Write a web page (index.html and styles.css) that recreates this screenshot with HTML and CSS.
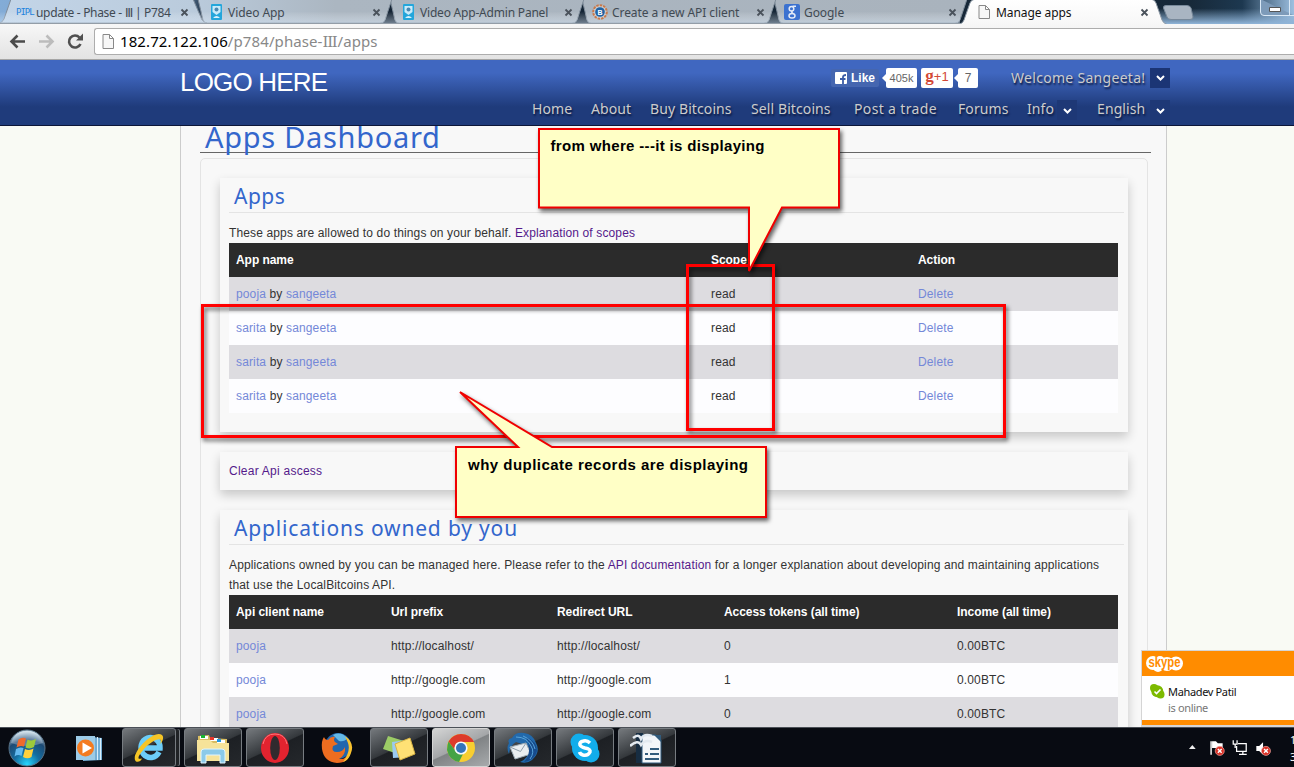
FILE: index.html
```html
<!DOCTYPE html>
<html lang="en">
<head>
<meta charset="utf-8">
<title>Manage apps</title>
<link rel="stylesheet" href="styles.css">
</head>
<body>
<header class="browser">
  <div class="tabstrip">
    <svg class="tab-shapes" width="1294" height="24" viewBox="0 0 1294 24">
      <defs>
        <linearGradient id="glass" x1="0" x2="1"><stop offset="0" stop-color="#83acd7"/><stop offset=".14" stop-color="#7397bd"/><stop offset=".16" stop-color="#142334"/><stop offset=".92" stop-color="#172939"/><stop offset=".96" stop-color="#1d3850"/><stop offset="1" stop-color="#9dc0e0"/></linearGradient>
        <linearGradient id="glow" x1="0" x2="0" y1="0" y2="1"><stop offset=".35" stop-color="#8fb2d3" stop-opacity="0"/><stop offset="1" stop-color="#8fb4d8"/></linearGradient>
        <linearGradient id="tabfill" gradientUnits="userSpaceOnUse" x1="0" x2="960" y1="0" y2="0"><stop offset="0" stop-color="#c3d5e8"/><stop offset=".2" stop-color="#bacbdc"/><stop offset=".35" stop-color="#abb6c1"/><stop offset="1" stop-color="#a9b3bd"/></linearGradient>
        <linearGradient id="sheen" x1="0" x2="0" y1="0" y2="1"><stop offset=".5" stop-color="#fff" stop-opacity="0"/><stop offset="1" stop-color="#d8e8f8" stop-opacity=".45"/></linearGradient>
        <linearGradient id="live" x1="0" x2="0" y1="0" y2="1"><stop offset="0" stop-color="#fff"/><stop offset="1" stop-color="#f7f7f7"/></linearGradient>
      </defs>
      <path fill="url(#glass)" d="M0 0H1294V24H0z"/>
      <path fill="url(#glow)" d="M1150 0H1294V24H1150z"/>
      <g fill="url(#tabfill)" stroke="#7f8c9a">
        <path d="M774 -1H967L960 20Q959 23 955 23H783Q780 23 779 20z"/>
        <path d="M582 -1H776L769 20Q768 23 764 23H591Q588 23 587 20z"/>
        <path d="M390 -1H584L577 20Q576 23 572 23H399Q396 23 395 20z"/>
        <path d="M198 -1H392L385 20Q384 23 380 23H207Q204 23 203 20z"/>
        <path d="M11 -1H193L202 20Q204 23 207 23H-1Q2 23 4 19z"/>
      </g>
      <path fill="url(#sheen)" d="M0 0H960V23H0z"/>
      <path fill="none" stroke="#939da7" d="M0 23.500H962"/>
      <path fill="url(#live)" stroke="#8d99a5" d="M960 24Q963 23 964 20L970 3Q971 0 975 -1H1151Q1155 0 1156 3L1162 20Q1163 23 1167 24.500H960z"/>
      <path fill="#a9b5c2" stroke="#78899a" d="M1163.500 8Q1163 5.500 1166 5.500H1187Q1190 5.500 1191 8L1193 17Q1193 19.500 1190 19.500H1171Q1168 19.500 1167 17z"/>
      <path fill="#7d9bb9" stroke="#dae9f6" d="M1260.500 -1V12Q1260.500 15.500 1264 15.500H1294M1289.500 0V15"/>
      <path fill="#fff" stroke="#555" d="M1269.500 7.500H1280.500V11.500H1269.500z"/>
    </svg>
    <div class="tab"><span class="pipl">PIPL</span><span class="tab-title t1">update - Phase - Ⅲ | P784</span><svg class="x" width="9" height="9"><path d="M1.500 1.500L7.500 7.500M7.500 1.500L1.500 7.500"/></svg></div>
    <div class="tab"><svg class="fav" width="16" height="16"><rect x="3" width="11" height="16" rx="1" fill="#24a6db"/><path d="M4.500 2H12.500V8L8.500 11L4.500 8z" fill="#c9ebfa"/><circle cx="8.500" cy="5.500" r="2" fill="#4a88b2"/><path d="M5 14Q8.500 10 12 14z" fill="#d9f2fc"/></svg><span class="tab-title">Video App</span><svg class="x" width="9" height="9"><path d="M1.500 1.500L7.500 7.500M7.500 1.500L1.500 7.500"/></svg></div>
    <div class="tab"><svg class="fav" width="16" height="16"><rect x="3" width="11" height="16" rx="1" fill="#24a6db"/><path d="M4.500 2H12.500V8L8.500 11L4.500 8z" fill="#c9ebfa"/><circle cx="8.500" cy="5.500" r="2" fill="#4a88b2"/><path d="M5 14Q8.500 10 12 14z" fill="#d9f2fc"/></svg><span class="tab-title t3">Video App-Admin Panel</span><svg class="x" width="9" height="9"><path d="M1.500 1.500L7.500 7.500M7.500 1.500L1.500 7.500"/></svg></div>
    <div class="tab"><svg class="fav" width="16" height="16"><circle cx="8" cy="8" r="6.800" fill="#ccd1d5" stroke="#c9794a" stroke-width="2" stroke-dasharray="2.500 1"/><circle cx="8" cy="8" r="4.800" fill="#2163a4"/><text x="5.500" y="11" class="fav-b">B</text></svg><span class="tab-title t4">Create a new API client</span><svg class="x" width="9" height="9"><path d="M1.500 1.500L7.500 7.500M7.500 1.500L1.500 7.500"/></svg></div>
    <div class="tab"><svg class="fav" width="16" height="16"><rect width="16" height="16" rx="2" fill="#3c72d0"/><g fill="none" stroke="#e4ebf7" stroke-width="1.500"><ellipse cx="7.500" cy="4.800" rx="2.300" ry="2.300"/><path d="M8.500 2.200H12M8.500 7Q6.500 8.200 9 9.200"/><ellipse cx="8" cy="11.700" rx="3" ry="2.300"/></g></svg><span class="tab-title t5">Google</span><svg class="x" width="9" height="9"><path d="M1.500 1.500L7.500 7.500M7.500 1.500L1.500 7.500"/></svg></div>
    <div class="tab live"><svg class="fav" width="16" height="16"><path d="M3 1.500H9.500L13.500 5.500V14.500H3zM9.500 1.500V5.500H13.500" fill="#f7f7f7" stroke="#888"/></svg><span class="tab-title t6">Manage apps</span><svg class="x" width="9" height="9"><path d="M1.500 1.500L7.500 7.500M7.500 1.500L1.500 7.500"/></svg></div>
  </div>
  <div class="toolbar">
    <svg width="94" height="36" viewBox="0 0 94 36" fill="none" stroke-width="2.600">
      <path stroke="#4b4b4b" d="M25 17.500H11.500M17.500 11.500L11.500 17.500L17.500 23.500"/>
      <path stroke="#bcbcbc" d="M39 17.500H52.500M46.500 11.500L52.500 17.500L46.500 23.500"/>
      <path stroke="#505050" d="M80.500 20A6 6 0 1 1 79.500 13.500"/><path fill="#505050" d="M83 9.500V16.500H76z"/>
    </svg>
    <div class="omnibox"><svg width="14" height="18"><path d="M2 2.500H8.500L12.500 6.500V16.500H2zM8.500 2.500V6.500H12.500" fill="#f7f7f7" stroke="#888"/></svg><span class="host">182.72.122.106</span><span class="path">/p784/phase-<span class="serif">III</span>/apps</span></div>
  </div>
</header>

<main class="site">
  <div class="masthead">
    <div class="masthead-inner">
      <div class="logo">LOGO HERE</div>
      <div class="right">
        <div class="account">
          <span class="like"><svg width="12" height="12"><rect width="12" height="12" rx="1" fill="#fff"/><path d="M8 12V7H10.500M5 7H8M8 7V5Q8 3 11 3" stroke="#3b5ca7" stroke-width="1.800" fill="none"/></svg>Like</span>
          <span class="count fb">405k</span><span class="plus"><b>g</b>+1</span><span class="count gp">7</span>
          <span class="welcome">Welcome Sangeeta!</span><span class="drop strong"><svg width="9" height="6"><path d="M1 1L4.500 4.500L8 1" fill="none" stroke="#fff" stroke-width="2"/></svg></span>
        </div>
        <nav class="menu">
          <a class="m-home">Home</a><a class="m-about">About</a><a class="m-buy">Buy Bitcoins</a><a class="m-sell">Sell Bitcoins</a><a class="m-post">Post a trade</a><a class="m-forums">Forums</a><a class="m-info">Info</a><span class="drop"><svg width="9" height="6"><path d="M1 1L4.500 4.500L8 1" fill="none" stroke="#fff" stroke-width="2"/></svg></span><a class="m-lang">English</a><span class="drop"><svg width="9" height="6"><path d="M1 1L4.500 4.500L8 1" fill="none" stroke="#fff" stroke-width="2"/></svg></span>
        </nav>
      </div>
    </div>
  </div>
  <div class="column">
    <h1><span>Apps Dashboard</span></h1>
    <div class="frame">
      <section class="panel apps">
        <h2 class="h-apps">Apps</h2>
        <p class="intro">These apps are allowed to do things on your behalf. <a class="visited">Explanation of scopes</a></p>
        <div class="table three">
          <div class="row head"><b>App name</b><b>Scope</b><b>Action</b></div>
          <div class="row odd"><span><a>pooja</a> by <a>sangeeta</a></span><span>read</span><a>Delete</a></div>
          <div class="row"><span><a>sarita</a> by <a>sangeeta</a></span><span>read</span><a>Delete</a></div>
          <div class="row odd"><span><a>sarita</a> by <a>sangeeta</a></span><span>read</span><a>Delete</a></div>
          <div class="row"><span><a>sarita</a> by <a>sangeeta</a></span><span>read</span><a>Delete</a></div>
        </div>
      </section>
      <section class="panel clear"><a class="visited">Clear Api ascess</a></section>
      <section class="panel owned">
        <h2 class="h-owned">Applications owned by you</h2>
        <p class="desc"><span>Applications owned by you can be managed here. Please refer to the <a class="visited">API documentation</a> for a longer explanation about developing and maintaining applications</span><br>that use the LocalBitcoins API.</p>
        <div class="table five">
          <div class="row head"><b>Api client name</b><b>Url prefix</b><b>Redirect URL</b><b>Access tokens (all time)</b><b>Income (all time)</b></div>
          <div class="row odd"><a>pooja</a><span>http://localhost/</span><span>http://localhost/</span><span>0</span><span>0.00BTC</span></div>
          <div class="row"><a>pooja</a><span>http://google.com</span><span>http://google.com</span><span>1</span><span>0.00BTC</span></div>
          <div class="row odd"><a>pooja</a><span>http://google.com</span><span>http://google.com</span><span>0</span><span>0.00BTC</span></div>
        </div>
      </section>
    </div>
  </div>
</main>

<svg class="notes" width="1294" height="767" viewBox="0 0 1294 767">
  <g class="mark" fill="none" stroke="#f00" stroke-width="3">
    <rect x="202.500" y="305.500" width="802" height="131"/>
    <rect x="687.500" y="265.500" width="86" height="164"/>
  </g>
  <g class="bubble" fill="#ffffc6" stroke="#f00000" stroke-width="2">
    <path d="M539 129H839V207.500H782L749 271L749 207.500H539z"/>
    <path d="M456 447H518L460 392L552 447H766V517H456z"/>
  </g>
  <g class="note-text">
    <text x="550.500" y="151" textLength="214">from where ---it is displaying</text>
    <text x="468" y="469.500" textLength="280">why duplicate records are displaying</text>
  </g>
</svg>

<aside class="toast">
  <div class="toast-head"><svg width="40" height="20"><g fill="#fff"><circle cx="8" cy="9" r="7"/><circle cx="15" cy="7" r="5"/><circle cx="31" cy="9.500" r="7"/><circle cx="22" cy="10" r="7"/><circle cx="13" cy="13" r="5"/></g><text x="3.500" y="12.500" textLength="32" lengthAdjust="spacingAndGlyphs" class="skype-word">skype</text></svg></div>
  <div class="toast-body">
    <svg width="15" height="15"><circle cx="4" cy="4" r="4" fill="#7dba00"/><circle cx="10.500" cy="10.500" r="4" fill="#7dba00"/><circle cx="7.300" cy="7.300" r="6" fill="#7dba00"/><path d="M4.500 7.500L6.500 9.500L10.500 5.500" stroke="#fff" stroke-width="1.600" fill="none"/></svg>
    <div><div class="who">Mahadev Patil</div><div class="state">is online</div></div>
  </div>
</aside>

<footer class="taskbar">
  <span class="slot start"><svg width="38" height="38" viewBox="0 0 38 38"><defs><radialGradient id="orb" cx=".5" cy=".95" r=".9"><stop offset="0" stop-color="#27d8ff"/><stop offset=".4" stop-color="#146da0"/><stop offset=".75" stop-color="#1d4a74"/><stop offset="1" stop-color="#c0d6e4"/></radialGradient></defs><circle cx="19" cy="19" r="18" fill="url(#orb)" stroke="#587286"/><path d="M3 14Q19 20 35 14Q31 2 19 2Q7 2 3 14z" fill="#fff" opacity=".28"/><path fill="#ef6a2c" d="M10.500 10.500Q14 7.500 18 9.500L16 17.500Q12 16 8.500 18.500z"/><path fill="#9dca3b" d="M19.500 10.500Q23.500 12.500 28 10L26 18Q22 20.500 17.500 18.500z"/><path fill="#64b9ee" d="M8 20Q12 17.500 15.500 19L13.500 27Q10 25 6.500 27.500z"/><path fill="#ffd13d" d="M17 20Q21.500 22 25.500 19.500L23.500 28Q19.500 30.500 15 28z"/></svg></span>
  <span class="slot plain"><svg width="28" height="28" viewBox="0 0 28 28"><path fill="#74aed5" d="M8 2L27 4V26L8 27z"/><path stroke="#d9effc" d="M22.500 3V26M25.500 4V26"/><path fill="#9ccbe7" d="M1 2H20V26H1z"/><circle cx="10.500" cy="14" r="8.500" fill="#f47b20"/><path fill="#fff" d="M7.500 8.500L17 14L7.500 19.500z"/></svg></span>
  <span class="slot box stacked"><svg width="32" height="32" viewBox="0 0 32 32"><path d="M26 20A9.500 10 0 1 1 27 16H10" fill="none" stroke="#6ccdf8" stroke-width="5.500"/><path d="M3 29.500C-4 23 20 -3 29 3C32 6 28 12 27 12C31 3 19 8 11 17C4 25 4 28 9 26.500Q7 30.500 3 29.500z" fill="#f5c526"/></svg></span>
  <span class="slot box"><svg width="34" height="32" viewBox="0 0 34 32"><path fill="#d9bd62" d="M2 4L13 3L14 6L31 7V28H2z"/><path fill="#fff" d="M4 4H12V7H4zM14 6H22V9H14zM21 8H29V11H21z"/><path fill="#f6e39a" d="M1 8H14L17 11H33V29H1z"/><path fill="#17b432" d="M5 3H9V6H5z"/><path fill="#e5372c" d="M14 5H18V8H14z"/><path fill="#2499e2" d="M21 7H25V10H21z"/><path fill="#8ccae9" stroke="#e0f5ff" d="M5 20Q5 17 8 17H26Q29 17 29 20V31H24V23H10V31H5z"/></svg></span>
  <span class="slot box"><svg width="30" height="32" viewBox="0 0 30 32"><ellipse cx="15" cy="16" rx="14" ry="15" fill="#e3232f"/><ellipse cx="15" cy="16" rx="4.800" ry="12" fill="#302a2e"/><path d="M3 12Q5 2 15 2Q25 2 27 12" fill="none" stroke="#ff7478"/></svg></span>
  <span class="slot plain"><svg width="32" height="32" viewBox="0 0 32 32"><circle cx="17" cy="14" r="13" fill="#2166ae"/><path fill="#63b8e6" d="M12 3Q20 -1 26 6Q24 10 18 9z"/><path fill="#ed6d20" d="M1 17Q0 9 3 5Q4 8 7 8Q10 4 14 5Q12 8 14 10L17 12L12 14Q10 20 16 20Q22 20 24 15Q25 23 18 27Q25 28 29 20Q28 31 16 31Q3 30 1 17z"/><path fill="#f9c22e" d="M24 4Q34 11 30 21Q28 28 22 30Q30 19 27 11z"/></svg></span>
  <span class="slot box"><svg width="34" height="30" viewBox="0 0 34 30"><path fill="#9ccc66" d="M1 16L6 3L22 8L16 21z"/><path fill="#9bcaf0" d="M10 9L25 7L26 24L11 25z"/><path fill="#ffe175" stroke="#d9b443" d="M13 11L28 5L33 21L18 27z"/></svg></span>
  <span class="slot box active"><svg width="30" height="30" viewBox="0 0 30 30"><circle cx="15" cy="15" r="14" fill="#f8ce31"/><path fill="#dd3b2c" d="M2.500 8.500Q7 1 15 1Q24 1 28 9H15A6 6 0 0 0 9.500 18z"/><path fill="#45a345" d="M2.500 8.500L9.500 18A6 6 0 0 0 17 21L13 29Q3 27 1 17Q1 12 2.500 8.500z"/><circle cx="15" cy="15" r="6.600" fill="#f4f8fd"/><circle cx="15" cy="15" r="5" fill="#3474ba"/></svg></span>
  <span class="slot box"><svg width="32" height="32" viewBox="0 0 32 32"><path fill="#2269ab" d="M2 11Q0 7 5 6Q8 0 17 1Q26 2 29 11Q34 20 25 28Q20 32 13 30Q24 25 21 14L9 10Q3 13 2 22Q-1 16 2 11z"/><path fill="#e9edf0" stroke="#9fadb7" d="M3 15L19 11L24 22L8 27z"/><path fill="none" stroke="#8f9da8" d="M3 15L13.500 19.500L19 11"/><path fill="#174b8c" d="M19 5Q30 9 30 19Q28 28 17 30Q26 20 19 5z"/><path d="M9 5Q20 5 24 14Q28 20 23 27M16 4Q26 8 28 17" fill="none" stroke="#58a4da"/></svg></span>
  <span class="slot box"><svg width="32" height="32" viewBox="0 0 32 32"><g fill="#12adeb"><circle cx="10" cy="10" r="8.500"/><circle cx="22" cy="22" r="8.500"/><circle cx="16" cy="16" r="13"/></g><path d="M21 11Q18 8 14.500 9Q10 10 11 13Q12 15 16 16Q22 17 21 20Q19 24 14 23Q11 22 10.500 20" fill="none" stroke="#fff" stroke-width="3.500"/></svg></span>
  <span class="slot box"><svg width="34" height="32" viewBox="0 0 34 32"><path fill="#172d42" d="M6 1H13V31H6z"/><path fill="#f3f6f9" stroke="#315b7c" d="M12 3H26L31 8V31H12z"/><path fill="#315b7c" d="M24 3L31 10V3z"/><path stroke="#315b7c" stroke-width="2" d="M20 17H29M20 22H29M15 27H29M15 22H18"/><path fill="none" stroke="#e4eaf0" stroke-width="2.500" d="M3 6Q9 1 11 7Q14 1 22 4M0 14Q8 7 11 13Q15 7 22 10"/></svg></span>
  <span class="tray">
    <svg width="106" height="20" viewBox="0 0 106 20"><path fill="#eee" d="M1 11L4.500 7L8 11z"/><path stroke="#fff" stroke-width="1.500" fill="none" d="M24 3V17"/><path fill="#fff" d="M25 3H29L31 5H36V12H31L29 10H25z"/><path fill="none" stroke="#fff" stroke-width="1.300" d="M47 2V6H51V2M49 6V10M52 5.500H60.500V13.500H50.500V8M53 16.500H61M57 13.500V16.500"/><path fill="#fff" d="M71 8H74L78 4V17L74 13H71z"/><g fill="#d83025" stroke="#f4aaa4" stroke-width=".7"><circle cx="33" cy="13" r="4.700"/><circle cx="81" cy="13" r="4.700"/></g><path stroke="#fff" stroke-width="1.500" d="M31 11L35 15M35 11L31 15M79 11L83 15M83 11L79 15"/></svg>
    <span class="clock">1<br>3</span>
  </span>
</footer>
</body>
</html>
```
FILE: styles.css
```css
* { box-sizing: border-box; }
body {
  margin: 0; width: 1294px; height: 767px; overflow: hidden;
  display: grid; grid-template-rows: 60px 667px 40px;
  font-family: "Liberation Sans", Arial, sans-serif; font-size: 12px; color: #333;
}
h1, h2, p { margin: 0; font-weight: normal; }
svg { display: block; flex: none; }

/* browser window */
.tabstrip { height: 24px; position: relative; display: flex; }
.tab-shapes { position: absolute; top: 0; left: 0; }
.tab { width: 192px; height: 24px; padding-left: 16px; display: flex; align-items: center; flex: none; position: relative; font: 12px "Noto Sans", sans-serif; letter-spacing: -.07px; color: #414a53; }
.tab.live { color: #111; }
.fav { margin-right: 4px; }
.fav-b { font: bold 7px "Liberation Sans", sans-serif; fill: #fff; }
.pipl { width: 20px; font: 9px "DejaVu Sans Mono", monospace; letter-spacing: -1px; color: #1f83dd; }
.tab-title { white-space: nowrap; width: 144px; }
.t1 { letter-spacing: -.33px; }
.t3 { letter-spacing: -.2px; }
.x { fill: none; stroke: #4a525b; stroke-width: 1.8; }
.toolbar { height: 36px; display: flex; background: linear-gradient(#f7f7f7, #e3e3e3); border-bottom: 1px solid #a5a5a5; }
.omnibox { flex: 1; height: 27px; margin-top: 4px; border: 1px solid #adadad; border-right: 0; border-radius: 3px 0 0 3px; background: #fff; display: flex; align-items: center; padding: 0 0 2px 6px; font: 15px "Noto Sans", sans-serif; }
.host { color: #000; margin-left: 5px; letter-spacing: .1px; }
.path { color: #888; letter-spacing: .1px; }
.serif { font-family: "DejaVu Serif", serif; letter-spacing: -1.3px; margin-right: 1px; }

/* site header */
.site { background: #f9faf4; overflow: hidden; display: flex; flex-direction: column; }
.masthead { flex: none; height: 66px; border-bottom: 1px solid #0c1638; background: linear-gradient(#4067c0 20%, #1f3b7b 72%); }
.masthead-inner { width: 990px; margin-left: 180px; display: flex; justify-content: space-between; }
.logo { font-size: 26px; letter-spacing: -.8px; color: #fff; line-height: 30px; padding-top: 7px; }
.right { display: flex; flex-direction: column; align-items: flex-end; padding-top: 8px; }
.account, .menu { display: flex; align-items: center; font: 14px "Noto Sans", sans-serif; color: #ccc; text-shadow: 1px 2px 2px #0a173d; white-space: nowrap; }
.account { height: 20px; }
.menu { height: 20px; margin-top: 12px; }
.like { display: flex; align-items: center; gap: 4px; background: #4566b0; height: 18px; padding: 0 4px; border-radius: 2px; font: bold 12px "Liberation Sans", sans-serif; color: #fff; text-shadow: none; margin-right: 7px; }
.count { position: relative; background: #fff; color: #666; font: 12px "Liberation Sans", sans-serif; text-shadow: none; height: 20px; line-height: 20px; text-align: center; border-radius: 2px; }
.count::before { content: ""; position: absolute; left: -4px; top: 6px; border: 4px solid transparent; border-left: 0; border-right-color: #fff; }
.fb { width: 31px; font-size: 11px; }
.gp { width: 20px; margin-left: 5px; margin-right: 33px; }
.plus { width: 32px; height: 20px; margin-left: 4px; background: #fff; border-radius: 2px; text-align: center; font: 13px/18px "Liberation Sans", sans-serif; color: #d34836; text-shadow: none; }
.plus b { font: bold 17px/16px "Liberation Serif", serif; }
.drop { width: 20px; height: 20px; background: #1e3876; display: flex; align-items: center; justify-content: center; flex: none; }
.drop.strong { background: #1b3575; }
.welcome { width: 134px; margin-right: 5px; padding-bottom: 2px; letter-spacing: .3px; }
.menu a { letter-spacing: .1px; padding-bottom: 3px; }
.menu svg { margin-top: 2px; }
.m-home { width: 59px; } .m-about { width: 59px; } .m-buy { width: 101px; } .m-sell { width: 103px; }
.menu .m-post { width: 104px; letter-spacing: .35px; } .m-forums { width: 69px; } .m-info { width: 30px; } .m-lang { width: 53px; margin-left: 20px; }

/* page content */
.column { width: 987px; margin-left: 180px; flex: 1; border: solid #ccc; border-width: 0 1px; background: #f8f8f8; padding: 0 18px 0 19px; letter-spacing: .135px; }
h1 { width: 951px; height: 27px; border-bottom: 1px solid #666; padding-left: 5px; font: 29px/21px "Noto Sans", sans-serif; letter-spacing: .7px; color: #36c; }
.frame { width: 948px; height: 600px; margin-top: 5px; border: 1px solid #e4e4e4; border-radius: 5px; padding: 19px; }
.panel { width: 908px; margin-bottom: 20px; padding-left: 9px; background: #f8f8f8; box-shadow: 0 5px 10px rgba(0,0,0,.2); }
.apps { height: 254px; }
.clear { height: 38px; line-height: 38px; letter-spacing: .25px; }
.owned { height: 300px; }
h2 { width: 895px; height: 35px; border-bottom: 1px solid #e4e4e4; padding-left: 5px; font: 21px/37px "Noto Sans", sans-serif; letter-spacing: .5px; color: #36c; }
.h-owned { letter-spacing: .83px; }
.intro { height: 30px; padding-top: 10px; line-height: 20px; }
.desc { height: 50px; padding-top: 10px; line-height: 20px; white-space: nowrap; }
.visited { color: #551a8b; }
.table { width: 889px; }
.row { display: grid; height: 34px; align-items: center; padding-left: 7px; background: #fdfdff; }
.three .row { grid-template-columns: 475px 207px 1fr; }
.five .row { grid-template-columns: 155px 166px 167px 233px 1fr; }
.row a { color: #7488d8; }
.row.odd { background: #dddce0; }
.row.head { background: #2b2b2b; color: #fff; letter-spacing: -.05px; }

/* annotations over the page */
.notes { position: absolute; top: 0; left: 0; }
.mark, .bubble { filter: drop-shadow(2px 3px 2px rgba(0,0,0,.6)); }
.note-text { font: bold 15px "Liberation Sans", sans-serif; fill: #000; }

/* chat notification */
.toast { position: absolute; left: 1141px; top: 650px; width: 153px; height: 77px; background: #fff; border: solid #d5d5d5; border-width: 1px 0 1px 1px; border-bottom-width: 2px; }
.toast::after { content: ""; display: block; height: 5px; background: #ff8c00; }
.toast-head { height: 25px; background: #ff8c00; padding: 3px 0 0 3px; }
.toast-body { height: 44px; display: flex; gap: 3px; padding: 8px 0 0 8px; font: 11px/16px "Noto Sans", sans-serif; letter-spacing: -.35px; color: #111; }
.state { color: #777; }
.skype-word { font: bold 14px "Liberation Sans", sans-serif; fill: #ff8c00; }

/* taskbar */
.taskbar { background: #080b12; border-top: 1px solid #4b5057; display: flex; align-items: center; position: relative; }
.slot { width: 58px; height: 39px; margin-right: 4px; display: flex; align-items: center; justify-content: center; flex: none; }
.start { width: 54px; margin-right: 6px; }
.box { border: 1px solid #777c81; border-radius: 3px; background: linear-gradient(155deg, #75797d, #34383c 48%, #1d2024 50%, #25282c); }
.stacked { width: 54px; margin-right: 8px; box-shadow: 4px 0 0 -1px #202326, 5px 0 0 -1px #777c81; }
.active { background: linear-gradient(155deg, #d4d5d5, #a4a6a8 48%, #808385 50%, #a7aaac); border-color: #d4d4d4; }
.tray { margin-left: auto; display: flex; align-items: center; width: 106px; flex: none; overflow: hidden; }
.tray svg { width: 102px; flex: none; }
.clock { font: 11px/17px "Noto Sans", sans-serif; color: #fff; width: 6px; flex: none; }
```
